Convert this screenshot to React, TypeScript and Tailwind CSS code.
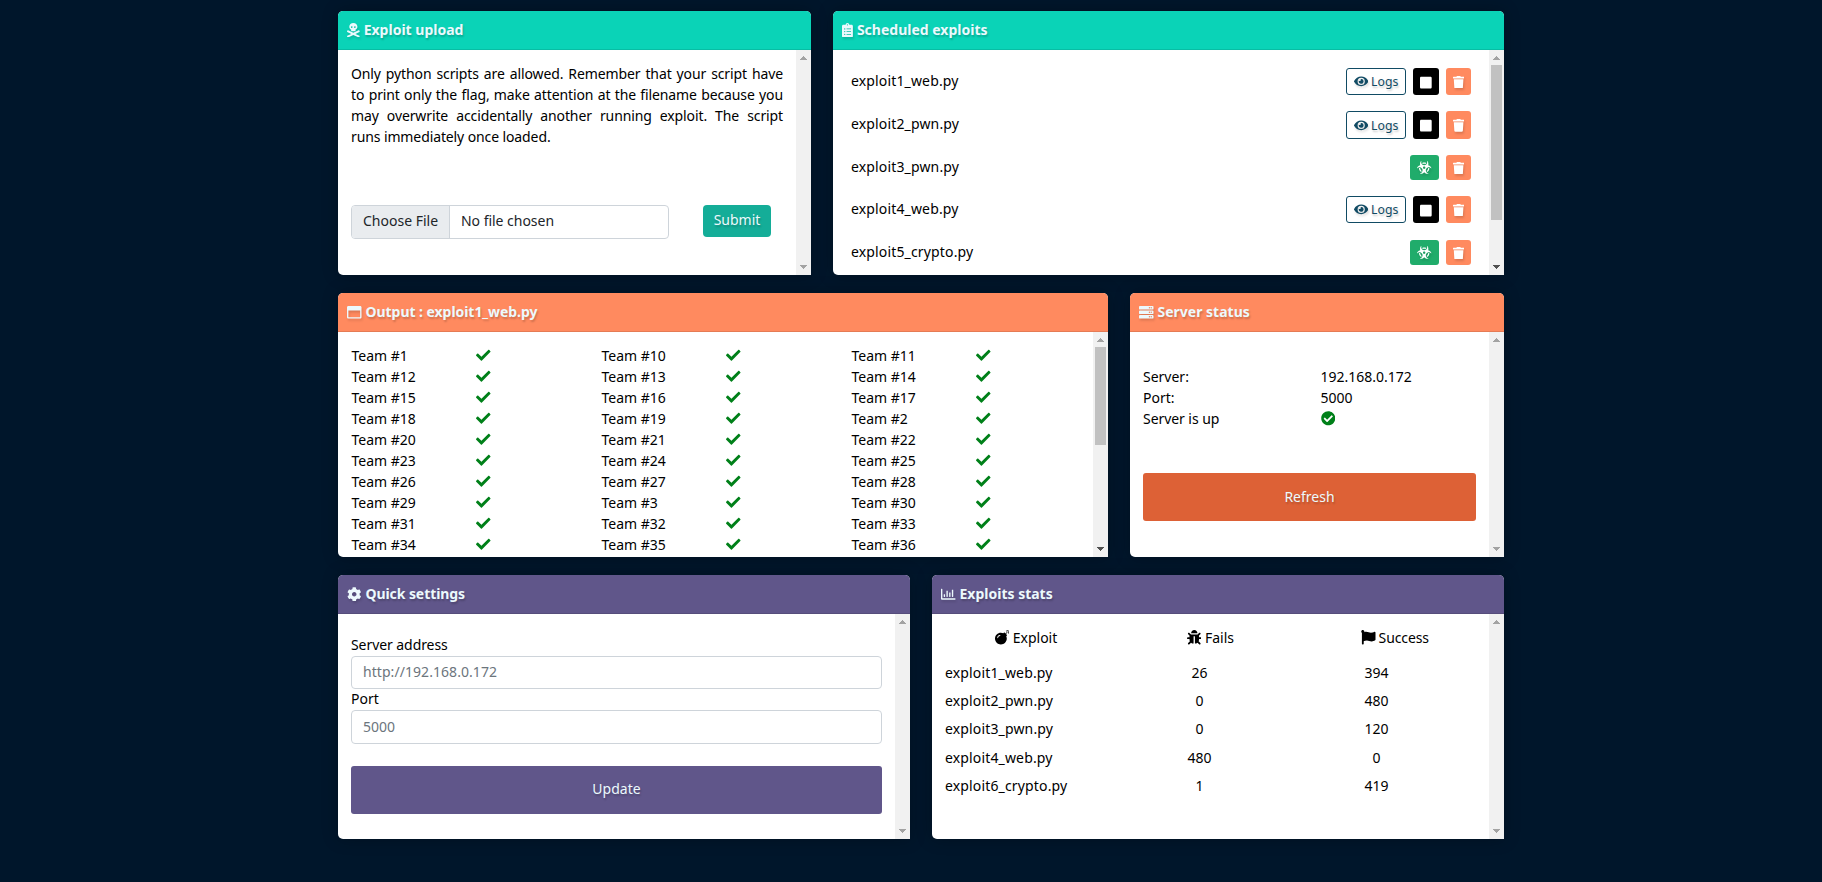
import type { ReactNode } from "react";
import {
  FaBiohazard,
  FaBomb,
  FaBug,
  FaCheck,
  FaCheckCircle,
  FaClipboardList,
  FaCog,
  FaEye,
  FaFlag,
  FaRegChartBar,
  FaRegWindowMaximize,
  FaServer,
  FaSkullCrossbones,
  FaStop,
  FaTrash,
} from "react-icons/fa";

const ICON_SHADOW = "drop-shadow-[1px_2px_1px_rgba(0,0,0,0.14)]";
const TEXT_SHADOW = "[text-shadow:1px_2px_2px_rgba(0,0,0,0.2)]";

function Arrow({ down, active }: { down?: boolean; active?: boolean }) {
  return (
    <svg
      viewBox="0 0 7 4"
      className={`h-[4px] w-[7px] ${active ? "text-[#505050]" : "text-[#a3a3a3]"}`}
      shapeRendering="crispEdges"
    >
      <path fill="currentColor" d={down ? "M0 0h7L3.5 4z" : "M0 4h7L3.5 0z"} />
    </svg>
  );
}

function Scrollbar({ thumb }: { thumb?: number }) {
  return (
    <div className="flex w-[15px] shrink-0 flex-col items-center bg-[#f1f1f1]">
      <div className="flex h-[15px] items-start pt-[6px]">
        <Arrow />
      </div>
      <div className="flex-1">
        {thumb && <div className="w-[11px] bg-[#c1c1c1]" style={{ height: thumb }} />}
      </div>
      <div className="flex h-[15px] items-start pt-[5px]">
        <Arrow down active={Boolean(thumb)} />
      </div>
    </div>
  );
}

type CardProps = {
  icon: ReactNode;
  title: string;
  tone: string;
  width: string;
  thumb?: number;
  titleClass?: string;
  children: ReactNode;
};

function Card({ icon, title, tone, width, thumb, titleClass = "", children }: CardProps) {
  return (
    <section
      className={`flex h-[264px] flex-col overflow-hidden rounded-t-[5px] rounded-bl-[5px] bg-white shadow-[0_0_16px_rgba(0,0,0,0.25)] ${width}`}
    >
      <header
        className={`flex h-[39px] shrink-0 items-center gap-[4px] border-b border-black/10 pl-[9px] font-bold text-[#ecf9fd] ${TEXT_SHADOW} ${tone}`}
      >
        {icon}
        <h2 className={`pb-px ${titleClass}`}>{title}</h2>
      </header>
      <div className="flex min-h-0 flex-1">
        <div className="min-w-0 flex-1 overflow-hidden">{children}</div>
        <Scrollbar thumb={thumb} />
      </div>
    </section>
  );
}

const exploits = [
  { name: "exploit1_web.py", running: true, row: "h-[43px]", btn: "h-[27px]" },
  { name: "exploit2_pwn.py", running: true, row: "h-[44px]", btn: "h-[28px]" },
  { name: "exploit3_pwn.py", running: false, row: "h-[41px]", btn: "h-[25px]" },
  { name: "exploit4_web.py", running: true, row: "h-[44px]", btn: "h-[27px]" },
  { name: "exploit5_crypto.py", running: false, row: "h-[25px]", btn: "h-[25px]" },
];

const teams = [
  1, 10, 11, 12, 13, 14, 15, 16, 17, 18, 19, 2, 20, 21, 22, 23, 24, 25, 26, 27, 28, 29, 3, 30, 31,
  32, 33, 34, 35, 36,
];

const stats: [string, number, number][] = [
  ["exploit1_web.py", 26, 394],
  ["exploit2_pwn.py", 0, 480],
  ["exploit3_pwn.py", 0, 120],
  ["exploit4_web.py", 480, 0],
  ["exploit6_crypto.py", 1, 419],
];

export default function App() {
  return (
    <main className="flex h-screen flex-col items-start gap-[18px] overflow-hidden bg-[#00162b] pt-[11px] pl-[338px] font-['Noto_Sans',sans-serif] text-[14px] leading-[21px] text-black">
      <div className="flex w-[1166px] justify-between">
        <Card
          width="w-[473px]"
          tone="bg-[#0ad3b7]"
          title="Exploit upload"
          icon={<FaSkullCrossbones className={`h-[14.5px] w-[12.7px] ${ICON_SHADOW}`} />}
        >
          <div className="px-[13px] pt-[13px]">
            <p className="h-[84px] text-justify tracking-[-0.11px]">
              Only python scripts are allowed. Remember that your script have to print only the flag,
              make attention at the filename because you may overwrite accidentally another running
              exploit. The script runs immediately once loaded.
            </p>
            <div className="mt-[58px] flex items-start">
              <div className="flex h-[34px] w-[318px] overflow-hidden rounded-[4px] border border-[#ced4da] leading-[29px] text-[#212529]">
                <span className="w-[98px] border-r border-[#ced4da] bg-[#e9ecef] pl-[11px]">
                  Choose File
                </span>
                <span className="pl-[11px] tracking-[-0.03px]">No file chosen</span>
              </div>
              <button
                className={`ml-[34px] h-[32px] w-[68px] rounded-[4px] bg-[#14ad98] pb-[3px] text-[#ecf9fd] ${TEXT_SHADOW}`}
              >
                Submit
              </button>
            </div>
          </div>
        </Card>

        <Card
          width="w-[671px]"
          tone="bg-[#0ad3b7]"
          title="Scheduled exploits"
          thumb={155}
          icon={<FaClipboardList className={`h-[14.5px] w-[10.9px] ${ICON_SHADOW}`} />}
        >
          <ul className="pt-[18px] pr-[18px] pl-[18px]">
            {exploits.map((e) => (
              <li key={e.name} className={`flex items-start ${e.row}`}>
                <span className={`flex-1 tracking-[0.15px] ${e.running ? "pt-[2px]" : "pt-[1px]"}`}>
                  {e.name}
                </span>
                {e.running ? (
                  <>
                    <button
                      className={`mr-[7px] flex w-[60px] items-center justify-center gap-[3px] rounded-[3px] border border-[#114b64] text-[12.25px] text-[#114b64] ${TEXT_SHADOW} ${e.btn}`}
                    >
                      <FaEye className={`h-[12.8px] w-[14.4px] ${ICON_SHADOW}`} />
                      Logs
                    </button>
                    <button
                      className={`mr-[7px] flex w-[26px] items-center justify-center rounded-[3px] bg-black pt-[2px] text-white ${e.btn}`}
                    >
                      <FaStop className="h-[13.4px] w-[11.7px]" />
                    </button>
                  </>
                ) : (
                  <button
                    className={`mr-[7px] flex w-[29px] items-center justify-center rounded-[3px] bg-[#20ac6b] text-white ${e.btn}`}
                  >
                    <FaBiohazard className={`h-[12.8px] w-[14.4px] ${ICON_SHADOW}`} />
                  </button>
                )}
                <button
                  className={`flex w-[25px] items-center justify-center rounded-[3px] bg-[#ff8a5f] pt-px text-white ${e.btn}`}
                >
                  <FaTrash className={`h-[12.8px] w-[11.2px] ${ICON_SHADOW}`} />
                </button>
              </li>
            ))}
          </ul>
        </Card>
      </div>

      <div className="flex w-[1166px] justify-between">
        <Card
          width="w-[770px]"
          tone="bg-[#ff8a5f]"
          title="Output : exploit1_web.py"
          titleClass="tracking-[-0.05px]"
          thumb={98}
          icon={<FaRegWindowMaximize className={`h-[14.5px] w-[14.5px] ${ICON_SHADOW}`} />}
        >
          <div className="grid grid-cols-[250px_250px_250px] pt-[13px] pl-[13.5px]">
            {teams.map((n) => (
              <div key={n} className="flex h-[21px] items-center">
                <span className="w-[124.5px]">Team #{n}</span>
                <FaCheck className="h-[14.5px] w-[14.5px] text-[#008019]" />
              </div>
            ))}
          </div>
        </Card>

        <Card
          width="w-[374px]"
          tone="bg-[#ff8a5f]"
          title="Server status"
          icon={<FaServer className={`h-[14.5px] w-[14.5px] ${ICON_SHADOW}`} />}
        >
          <div className="px-[13px] pt-[34px]">
            <div className="grid grid-cols-[177.5px_1fr]">
              <span>Server:</span>
              <span>192.168.0.172</span>
              <span>Port:</span>
              <span>5000</span>
              <span className="tracking-[-0.06px]">Server is up</span>
              <span className="flex items-center">
                <FaCheckCircle className="h-[14.5px] w-[14.5px] text-[#008019]" />
              </span>
            </div>
            <button
              className={`mt-[44px] h-[48px] w-full rounded-[3px] bg-[#dd6136] pb-px text-[#ecf9fd] ${TEXT_SHADOW}`}
            >
              Refresh
            </button>
          </div>
        </Card>
      </div>

      <div className="flex w-[1166px] justify-between">
        <Card
          width="w-[572px]"
          tone="bg-[#60568a]"
          title="Quick settings"
          titleClass="tracking-[-0.08px]"
          icon={<FaCog className={`h-[14.5px] w-[14.5px] ${ICON_SHADOW}`} />}
        >
          <form className="flex flex-col px-[13px] pt-[20px]">
            <label className="h-[22px] tracking-[-0.07px]">Server address</label>
            <input
              className="h-[33px] rounded-[4px] border border-[#ced4da] px-[11px] pb-[2px] tracking-[0.06px] placeholder:text-[#6c757d] placeholder:opacity-100"
              placeholder="http://192.168.0.172"
            />
            <label className="h-[21px] leading-[20px]">Port</label>
            <input
              className="h-[34px] rounded-[4px] border border-[#ced4da] px-[11px] pb-[1px] placeholder:text-[#6c757d] placeholder:opacity-100"
              placeholder="5000"
            />
            <button
              type="button"
              className={`mt-[22px] h-[48px] rounded-[3px] bg-[#60568a] pb-[3px] text-[#ecf9fd] ${TEXT_SHADOW}`}
            >
              Update
            </button>
          </form>
        </Card>

        <Card
          width="w-[572px]"
          tone="bg-[#60568a]"
          title="Exploits stats"
          icon={<FaRegChartBar className={`h-[14.5px] w-[14.5px] ${ICON_SHADOW}`} />}
        >
          <div className="grid grid-cols-[184px_185px_184px] pt-[13px] pl-[2px]">
            <span className="flex items-center justify-center gap-[3.5px]">
              <FaBomb className="h-[14.5px] w-[14.5px]" />
              Exploit
            </span>
            <span className="flex items-center justify-center gap-[3.5px]">
              <FaBug className="h-[14.5px] w-[14.5px]" />
              Fails
            </span>
            <span className="flex items-center justify-center gap-[3px] tracking-[-0.1px]">
              <FaFlag className="h-[14.5px] w-[14.5px]" />
              Success
            </span>
          </div>
          <div className="grid auto-rows-[28.2px] grid-cols-[166px_177px_177px] pt-[14px] pl-[13px]">
            {stats.map(([name, fails, success]) => (
              <div key={name} className="contents">
                <span className="tracking-[0.15px]">{name}</span>
                <span className="text-center">{fails}</span>
                <span className="text-center">{success}</span>
              </div>
            ))}
          </div>
        </Card>
      </div>
    </main>
  );
}
